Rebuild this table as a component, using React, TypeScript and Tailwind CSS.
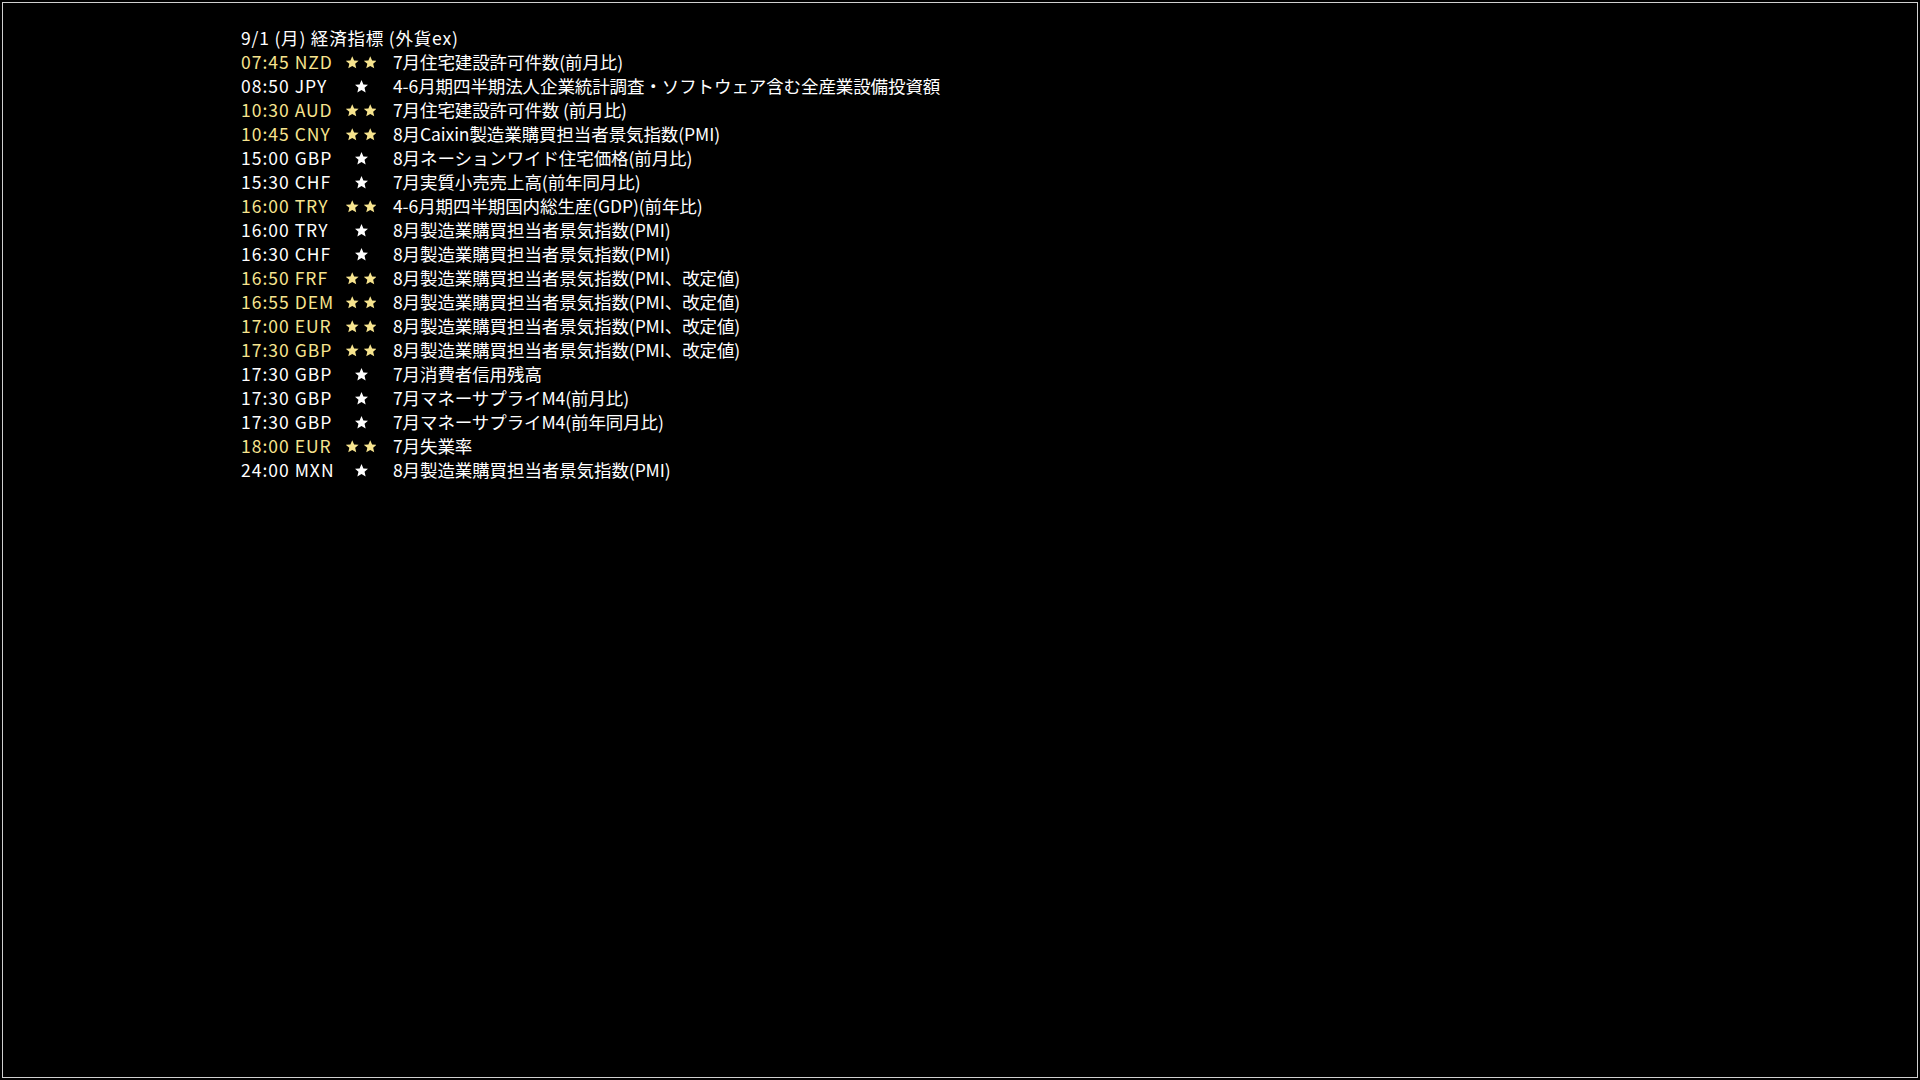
import React from "react";

type Row = { t: string; c: string; s: 1 | 2; d: string };

const rows: Row[] = [
  { t: "07:45", c: "NZD", s: 2, d: "7月住宅建設許可件数(前月比)" },
  { t: "08:50", c: "JPY", s: 1, d: "4-6月期四半期法人企業統計調査・ソフトウェア含む全産業設備投資額" },
  { t: "10:30", c: "AUD", s: 2, d: "7月住宅建設許可件数 (前月比)" },
  { t: "10:45", c: "CNY", s: 2, d: "8月Caixin製造業購買担当者景気指数(PMI)" },
  { t: "15:00", c: "GBP", s: 1, d: "8月ネーションワイド住宅価格(前月比)" },
  { t: "15:30", c: "CHF", s: 1, d: "7月実質小売売上高(前年同月比)" },
  { t: "16:00", c: "TRY", s: 2, d: "4-6月期四半期国内総生産(GDP)(前年比)" },
  { t: "16:00", c: "TRY", s: 1, d: "8月製造業購買担当者景気指数(PMI)" },
  { t: "16:30", c: "CHF", s: 1, d: "8月製造業購買担当者景気指数(PMI)" },
  { t: "16:50", c: "FRF", s: 2, d: "8月製造業購買担当者景気指数(PMI、改定値)" },
  { t: "16:55", c: "DEM", s: 2, d: "8月製造業購買担当者景気指数(PMI、改定値)" },
  { t: "17:00", c: "EUR", s: 2, d: "8月製造業購買担当者景気指数(PMI、改定値)" },
  { t: "17:30", c: "GBP", s: 2, d: "8月製造業購買担当者景気指数(PMI、改定値)" },
  { t: "17:30", c: "GBP", s: 1, d: "7月消費者信用残高" },
  { t: "17:30", c: "GBP", s: 1, d: "7月マネーサプライM4(前月比)" },
  { t: "17:30", c: "GBP", s: 1, d: "7月マネーサプライM4(前年同月比)" },
  { t: "18:00", c: "EUR", s: 2, d: "7月失業率" },
  { t: "24:00", c: "MXN", s: 1, d: "8月製造業購買担当者景気指数(PMI)" },
];

function Star({ color }: { color: string }) {
  return (
    <svg width="13" height="13" viewBox="1.5 1.5 21 21" className="block">
      <path
        d="M12 1.5l3.1 7.1 7.6.6-5.8 5 1.8 7.5L12 17.7l-6.7 4 1.8-7.5-5.8-5 7.6-.6z"
        fill={color}
      />
    </svg>
  );
}

export default function App() {
  return (
    <div className="w-[1920px] h-[1080px] bg-black p-[2px]">
      <div
        className="w-full h-full border border-[#d0d0d0] bg-black pl-[238px] pt-[23px] text-[17.5px] leading-[24px]"
        style={{ fontFamily: '"Noto Sans CJK JP", "Noto Sans", sans-serif' }}
      >
        <div className="text-white tracking-[0.8px]">9/1 (月) 経済指標 (外貨ex)</div>
        {rows.map((r, i) => {
          const yellow = r.s === 2;
          const col = yellow ? "text-[#f7e48e]" : "text-white";
          return (
            <div key={i} className={`flex items-center h-[24px] ${col}`}>
              <span className="w-[105px] whitespace-pre tracking-[1px]">
                {r.t} {r.c}
              </span>
              <span className="w-[30px] flex justify-center gap-[5px]">
                {yellow ? (
                  <>
                    <Star color="#f7e48e" />
                    <Star color="#f7e48e" />
                  </>
                ) : (
                  <Star color="#ffffff" />
                )}
              </span>
              <span className="ml-[17px] whitespace-pre text-white tracking-[-0.1px]">{r.d}</span>
            </div>
          );
        })}
      </div>
    </div>
  );
}
